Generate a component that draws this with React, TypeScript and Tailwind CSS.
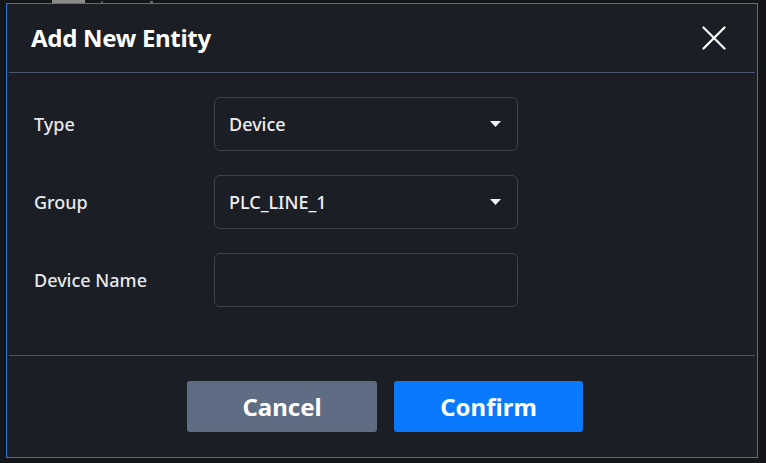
import React from "react";

function Caret() {
  return (
    <svg width="11" height="6" viewBox="0 0 11 6" className="shrink-0">
      <path d="M0 0 H11 L5.5 6 Z" fill="#f2f2f2" />
    </svg>
  );
}

function Row({ label, value, select }: { label: string; value?: string; select?: boolean }) {
  return (
    <div className="flex items-center h-[54px]">
      <div className="w-[205px] pl-[25px] text-[18px] font-medium text-[#e6e8ec]">{label}</div>
      <div className="w-[304px] h-[54px] rounded-[6px] border border-[#3d434f] flex items-center justify-between pl-[14px] pr-[16px]">
        <span className="text-[18px] font-medium text-[#eef0f3]">{value ?? ""}</span>
        {select ? <Caret /> : null}
      </div>
    </div>
  );
}

export default function App() {
  return (
    <div
      className="w-[766px] h-[463px] bg-[#131519] relative overflow-hidden"
      style={{ fontFamily: '"Noto Sans", "Open Sans", sans-serif' }}
    >
      <div className="absolute left-[52px] top-0 w-[33px] h-[3px] bg-[#8a8a8a]" />
      <div className="absolute left-[101px] top-[1px] w-[2px] h-[2px] bg-[#555]" />
      <div className="absolute left-[150px] top-[1px] w-[3px] h-[2px] bg-[#666]" />
      <div className="absolute left-[6px] top-[3px] w-[752px] h-[455px] border border-[#1f7ae6] bg-[#1b1e25] flex flex-col">
        <div className="h-[69px] mx-[2px] border-b border-[#4a5570] flex items-center justify-between pl-[22px] pr-[29px]">
          <span className="text-[24px] font-bold text-white tracking-[-0.3px]">Add New Entity</span>
          <svg width="24" height="24" viewBox="0 0 24 24">
            <path d="M1.5 1.5 L22.5 22.5 M22.5 1.5 L1.5 22.5" stroke="#ffffff" strokeWidth="2.2" strokeLinecap="round" />
          </svg>
        </div>
        <div className="flex flex-col gap-[24px] pt-[24px] h-[283px] mx-[2px] border-b border-[#4a5570]">
          <Row label="Type" value="Device" select />
          <Row label="Group" value="PLC_LINE_1" select />
          <Row label="Device Name" />
        </div>
        <div className="flex justify-center gap-[17px] pt-[25px] pl-[6px]">
          <button className="w-[190px] h-[51px] rounded-[3px] bg-[#5f6d84] text-white text-[24px] font-bold">Cancel</button>
          <button className="w-[189px] h-[51px] rounded-[3px] bg-[#0a79fe] text-white text-[24px] font-bold">Confirm</button>
        </div>
      </div>
    </div>
  );
}
